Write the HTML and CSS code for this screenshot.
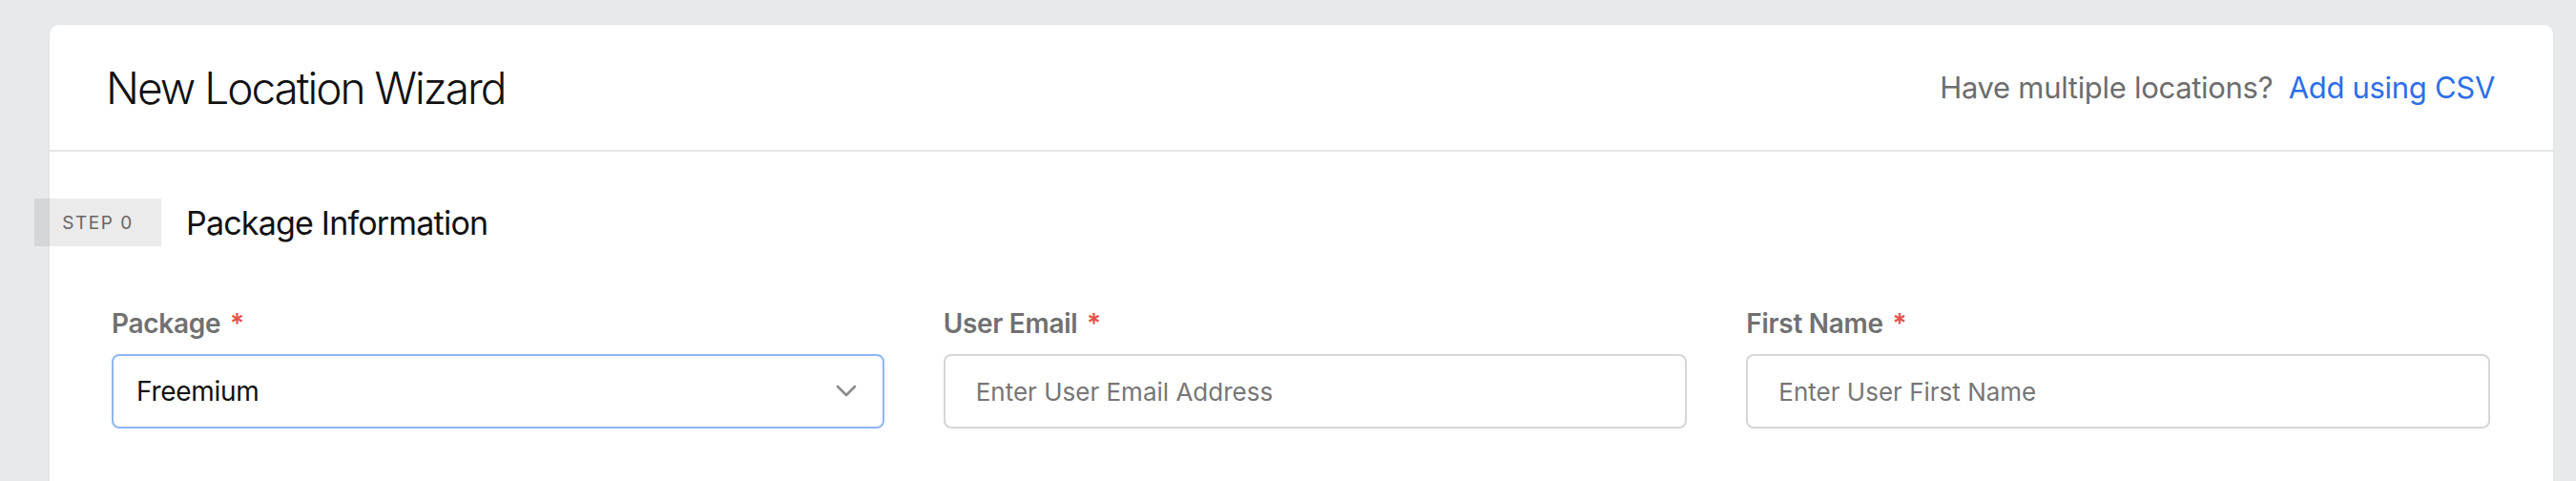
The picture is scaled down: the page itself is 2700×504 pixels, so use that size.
FILE: index.html
```html
<!DOCTYPE html>
<html lang="en">
<head>
    <meta charset="UTF-8">
    <meta name="viewport" content="width=device-width, initial-scale=1.0">
    <title>New Location Wizard</title>
    <link rel="stylesheet" href="styles.css">
</head>
<body>
    <div class="card">
        <div class="card-header">
            <h1 class="title">New Location Wizard</h1>
            <div class="csv-hint">Have multiple locations? <a href="#">Add using CSV</a></div>
        </div>

        <div class="card-body">
            <div class="step-head">
                <span class="step-badge">STEP 0</span>
                <h2 class="step-title">Package Information</h2>
            </div>

            <form class="form-row">
                <div class="field">
                    <label>Package <span class="req">*</span></label>
                    <div class="select">
                        <span>Freemium</span>
                        <svg width="22" height="14" viewBox="0 0 22 14">
                            <path d="M2 2 L11 11 L20 2" fill="none" stroke="#8a8a8a" stroke-width="2.6" stroke-linecap="round" stroke-linejoin="round"/>
                        </svg>
                    </div>
                </div>
                <div class="field">
                    <label for="email">User Email <span class="req">*</span></label>
                    <input type="text" id="email" placeholder="Enter User Email Address">
                </div>
                <div class="field">
                    <label for="firstName">First Name <span class="req">*</span></label>
                    <input type="text" id="firstName" placeholder="Enter User First Name">
                </div>
            </form>
        </div>
    </div>
</body>
</html>
```

FILE: styles.css
```css
body {
    margin: 0;
    padding: 26px 24px 0 52px;
    background-color: #e7eaeb;
    font-family: Inter, 'Noto Sans', sans-serif;
    color: #111;
}
.card {
    background-color: white;
    border-radius: 10px;
    box-shadow: 0 1px 3px rgba(0,0,0,0.06);
}
.card-header {
    display: flex;
    align-items: center;
    justify-content: space-between;
    height: 131px;
    padding: 0 61px 0 59px;
    border-bottom: 2px solid #e6e6e6;
}
.title {
    margin: 0;
    font-size: 46px;
    font-weight: 300;
    letter-spacing: -2px;
    color: #111;
}
.csv-hint {
    font-size: 31px;
    letter-spacing: -0.3px;
    color: #6d6d6d;
}
.csv-hint a {
    margin-left: 8px;
    color: #2d6fe8;
    text-decoration: none;
}
.card-body {
    padding: 49px 66px 90px 65px;
}
.step-head {
    display: flex;
    align-items: center;
    margin-left: -81px;
}
.step-badge {
    display: flex;
    align-items: center;
    justify-content: center;
    width: 133px;
    height: 50px;
    background-color: rgba(0,0,0,0.08);
    font-size: 19px;
    letter-spacing: 1.5px;
    color: #666;
}
.step-title {
    margin: 0 0 0 26px;
    font-size: 34px;
    font-weight: 400;
    letter-spacing: -0.8px;
    color: #111;
}
.form-row {
    display: grid;
    grid-template-columns: 810fr 780fr 780fr;
    gap: 62px;
    margin-top: 64px;
}
label {
    display: block;
    margin-bottom: 15px;
    line-height: 34px;
    font-size: 28px;
    font-weight: 600;
    letter-spacing: -0.3px;
    color: #707070;
}
.req {
    margin-left: 3px;
    color: #e5534b;
}
.select, input {
    box-sizing: border-box;
    width: 100%;
    height: 78px;
    border: 2px solid #d6d6d6;
    border-radius: 8px;
    background-color: white;
    font-family: inherit;
}
.select {
    display: flex;
    align-items: center;
    justify-content: space-between;
    padding: 0 27px 0 24px;
    border-color: #8fb6f2;
    font-size: 28px;
    letter-spacing: -0.3px;
    color: #111;
}
input {
    padding: 0 32px;
    font-size: 26px;
    color: #111;
    outline: none;
}
input::placeholder {
    color: #767676;
}
```
